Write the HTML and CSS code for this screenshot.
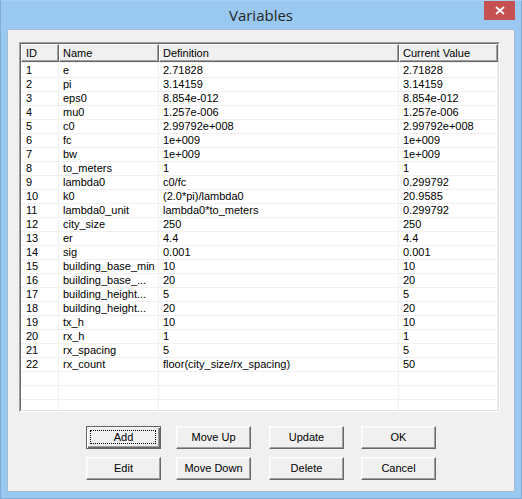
FILE: index.html
```html
<!DOCTYPE html>
<html>
<head>
<meta charset="utf-8">
<title>Variables</title>
<link rel="stylesheet" href="styles.css">
</head>
<body>
<div class="window">
  <div class="titlebar">
    <span class="spacer"></span>
    <div class="title">Variables</div>
    <div class="close">
      <svg width="10" height="9" viewBox="0 0 10 9"><path d="M1 1 L9 8 M9 1 L1 8" stroke="#fff" stroke-width="1.7" fill="none"/></svg>
    </div>
  </div>
  <div class="client">
    <div class="list">
      <div class="list-in">
        <div class="head">
          <div class="hc id">ID</div>
          <div class="hc">Name</div>
          <div class="hc">Definition</div>
          <div class="hc">Current Value</div>
        </div>
        <div class="rows">
          <div class="row"><div class="c id">1</div><div class="c">e</div><div class="c">2.71828</div><div class="c">2.71828</div></div>
          <div class="row"><div class="c id">2</div><div class="c">pi</div><div class="c">3.14159</div><div class="c">3.14159</div></div>
          <div class="row"><div class="c id">3</div><div class="c">eps0</div><div class="c">8.854e-012</div><div class="c">8.854e-012</div></div>
          <div class="row"><div class="c id">4</div><div class="c">mu0</div><div class="c">1.257e-006</div><div class="c">1.257e-006</div></div>
          <div class="row"><div class="c id">5</div><div class="c">c0</div><div class="c">2.99792e+008</div><div class="c">2.99792e+008</div></div>
          <div class="row"><div class="c id">6</div><div class="c">fc</div><div class="c">1e+009</div><div class="c">1e+009</div></div>
          <div class="row"><div class="c id">7</div><div class="c">bw</div><div class="c">1e+009</div><div class="c">1e+009</div></div>
          <div class="row"><div class="c id">8</div><div class="c">to_meters</div><div class="c">1</div><div class="c">1</div></div>
          <div class="row"><div class="c id">9</div><div class="c">lambda0</div><div class="c">c0/fc</div><div class="c">0.299792</div></div>
          <div class="row"><div class="c id">10</div><div class="c">k0</div><div class="c">(2.0*pi)/lambda0</div><div class="c">20.9585</div></div>
          <div class="row"><div class="c id">11</div><div class="c">lambda0_unit</div><div class="c">lambda0*to_meters</div><div class="c">0.299792</div></div>
          <div class="row"><div class="c id">12</div><div class="c">city_size</div><div class="c">250</div><div class="c">250</div></div>
          <div class="row"><div class="c id">13</div><div class="c">er</div><div class="c">4.4</div><div class="c">4.4</div></div>
          <div class="row"><div class="c id">14</div><div class="c">sig</div><div class="c">0.001</div><div class="c">0.001</div></div>
          <div class="row"><div class="c id">15</div><div class="c">building_base_min</div><div class="c">10</div><div class="c">10</div></div>
          <div class="row"><div class="c id">16</div><div class="c">building_base_...</div><div class="c">20</div><div class="c">20</div></div>
          <div class="row"><div class="c id">17</div><div class="c">building_height...</div><div class="c">5</div><div class="c">5</div></div>
          <div class="row"><div class="c id">18</div><div class="c">building_height...</div><div class="c">20</div><div class="c">20</div></div>
          <div class="row"><div class="c id">19</div><div class="c">tx_h</div><div class="c">10</div><div class="c">10</div></div>
          <div class="row"><div class="c id">20</div><div class="c">rx_h</div><div class="c">1</div><div class="c">1</div></div>
          <div class="row"><div class="c id">21</div><div class="c">rx_spacing</div><div class="c">5</div><div class="c">5</div></div>
          <div class="row"><div class="c id">22</div><div class="c">rx_count</div><div class="c">floor(city_size/rx_spacing)</div><div class="c">50</div></div>
          <div class="row"><div class="c id"></div><div class="c"></div><div class="c"></div><div class="c"></div></div>
          <div class="row"><div class="c id"></div><div class="c"></div><div class="c"></div><div class="c"></div></div>
          <div class="row"><div class="c id"></div><div class="c"></div><div class="c"></div><div class="c"></div></div>
        </div>
      </div>
    </div>
    <div class="buttons">
      <div class="btn default"><span>Add</span></div>
      <div class="btn"><span>Move Up</span></div>
      <div class="btn"><span>Update</span></div>
      <div class="btn"><span>OK</span></div>
      <div class="btn"><span>Edit</span></div>
      <div class="btn"><span>Move Down</span></div>
      <div class="btn"><span>Delete</span></div>
      <div class="btn"><span>Cancel</span></div>
    </div>
  </div>
</div>
</body>
</html>
```

FILE: styles.css
```css
html, body {
  margin: 0;
  padding: 0;
}
body {
  width: 522px;
  height: 499px;
  overflow: hidden;
  font-family: "Liberation Sans", Arial, sans-serif;
  font-size: 11px;
  color: #000;
}
.window {
  box-sizing: border-box;
  width: 522px;
  height: 499px;
  background: #99c9f0;
  border: 1px solid #7fabd6;
  border-top-color: #a9cdee;
  padding: 0 6px 6px 6px;
  display: flex;
  flex-direction: column;
}
.titlebar {
  height: 28px;
  flex: none;
  display: grid;
  grid-template-columns: 1fr auto 1fr;
}
.title {
  font-family: "Open Sans", "Noto Sans", sans-serif;
  font-size: 15px;
  line-height: 28px;
  color: #252525;
  text-align: center;
}
.close {
  justify-self: end;
  align-self: start;
  width: 31px;
  height: 19px;
  background: #c75050;
  display: flex;
  align-items: center;
  justify-content: center;
}
.close svg {
  display: block;
}
.client {
  flex: 1;
  box-sizing: border-box;
  background: #f0f0f0;
  border: 1px solid #a3bcd4;
  padding: 12px 0 0 11px;
}
.list {
  box-sizing: border-box;
  width: 481px;
  height: 370px;
  border: 1px solid;
  border-color: #a0a0a0 #ffffff #ffffff #a0a0a0;
}
.list-in {
  box-sizing: border-box;
  height: 100%;
  border: 1px solid;
  border-color: #696969 #e3e3e3 #e3e3e3 #696969;
  background: #fff;
  overflow: hidden;
}
.head {
  display: grid;
  grid-template-columns: 38px 100px 240px 99px;
  height: 18px;
}
.hc {
  box-sizing: border-box;
  height: 18px;
  background: #f0f0f0;
  border-top: 1px solid #fff;
  border-left: 1px solid #fff;
  border-right: 1px solid #696969;
  border-bottom: 1px solid #696969;
  box-shadow: inset -1px -1px 0 #a0a0a0;
  padding-left: 3px;
  line-height: 16px;
  white-space: nowrap;
  overflow: hidden;
}
.hc.id {
  padding-left: 4px;
}
.rows {
  padding-top: 1px;
  border-top: 1px solid #f0f0f0;
}
.row {
  display: grid;
  grid-template-columns: 38px 100px 240px 99px;
  height: 14px;
  box-sizing: border-box;
  border-bottom: 1px solid #f0f0f0;
}
.c {
  box-sizing: border-box;
  border-right: 1px solid #f0f0f0;
  padding-left: 4px;
  line-height: 13px;
  white-space: nowrap;
  overflow: hidden;
}
.c.id {
  padding-left: 5px;
}
.buttons {
  margin-top: 14px;
  margin-left: 67px;
  display: grid;
  grid-template-columns: 90px 93px 92px 75px;
  row-gap: 8px;
}
.btn {
  position: relative;
  box-sizing: border-box;
  width: 75px;
  height: 23px;
  background: #f0f0f0;
  border: 1px solid;
  border-color: #ffffff #696969 #696969 #ffffff;
  box-shadow: inset -1px -1px 0 #a0a0a0, inset 1px 1px 0 #f7f7f7;
  display: flex;
  align-items: center;
  justify-content: center;
  line-height: 13px;
}
.btn.default {
  border-color: #646464;
  box-shadow: inset 1px 1px 0 #ffffff, inset -1px -1px 0 #696969, inset -2px -2px 0 #a0a0a0;
}
.btn.default::after {
  content: "";
  position: absolute;
  left: 3px;
  top: 3px;
  right: 4px;
  bottom: 4px;
  border: 1px dotted #000;
}
```
